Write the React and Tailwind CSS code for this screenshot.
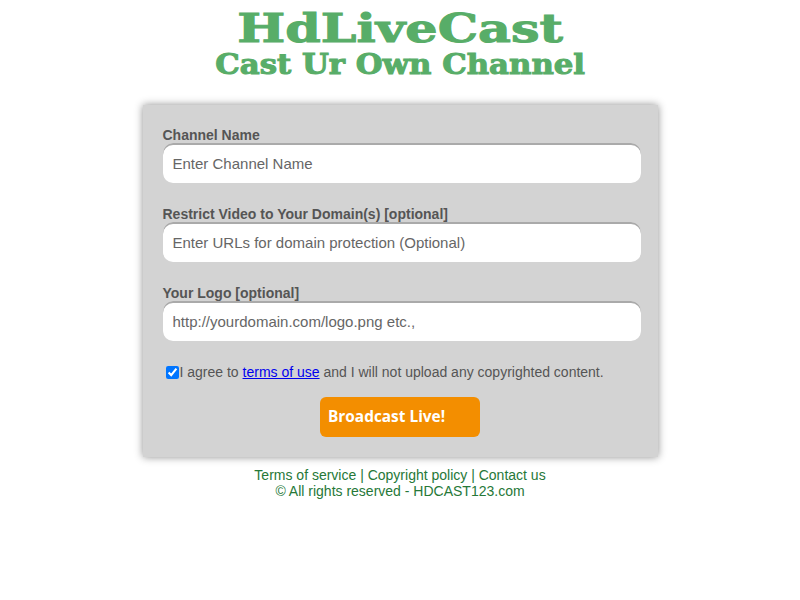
export default function App() {
  return (
    <div className="min-h-screen bg-white flex flex-col items-center font-['Liberation_Sans',Arial,sans-serif]">
      <div className="text-center text-[#58ad68] font-['DejaVu_Serif',serif] font-bold leading-none pt-[8px] [-webkit-text-stroke:1px_#58ad68]">
        <h1 className="text-[40px] leading-[40px] scale-x-[1.27]">HdLiveCast</h1>
        <h2 className="text-[27px] leading-[30px] mt-[2px] scale-x-[1.14]">Cast Ur Own Channel</h2>
      </div>

      <form className="mt-[25px] w-[515px] bg-[#d3d3d3] px-[20px] pt-[20px] pb-[20px] shadow-[0_0_8px_rgba(0,0,0,0.45)]">
        <label className="block text-[14px] font-bold text-[#555] leading-[16px] mt-[2px]">Channel Name</label>
        <input
          type="text"
          placeholder="Enter Channel Name"
          className="block w-[478px] h-[40px] px-[10px] rounded-[10px] bg-white shadow-[inset_0_2px_0_#aaa] text-[15px] placeholder:text-[#666] outline-none"
        />

        <label className="block mt-[23px] text-[14px] font-bold text-[#555] leading-[16px]">Restrict Video to Your Domain(s) [optional]</label>
        <input
          type="text"
          placeholder="Enter URLs for domain protection (Optional)"
          className="block w-[478px] h-[40px] px-[10px] rounded-[10px] bg-white shadow-[inset_0_2px_0_#aaa] text-[15px] placeholder:text-[#666] outline-none"
        />

        <label className="block mt-[23px] text-[14px] font-bold text-[#555] leading-[16px]">Your Logo [optional]</label>
        <input
          type="text"
          placeholder="http://yourdomain.com/logo.png etc.,"
          className="block w-[478px] h-[40px] px-[10px] rounded-[10px] bg-white shadow-[inset_0_2px_0_#aaa] text-[15px] placeholder:text-[#666] outline-none"
        />

        <div className="mt-[21px] flex items-center text-[14px] text-[#555]">
          <input type="checkbox" defaultChecked className="w-[13px] h-[13px] ml-[3px] mr-[1px] accent-[#0075ff]" />
          <span>
            I agree to <a href="#" className="text-[#0000ee] underline">terms of use</a> and I will not upload any copyrighted content.
          </span>
        </div>

        <div className="mt-[14px] flex justify-center">
          <button
            type="button"
            className="w-[160px] h-[40px] rounded-[6px] bg-[#f38e00] text-white text-left pl-[8px] text-[15.4px] font-bold font-['Open_Sans',sans-serif]"
          >
            Broadcast Live!
          </button>
        </div>
      </form>

      <div className="mt-[10px] text-center text-[14px] leading-[16px] text-[#267838]">
        <p>
          <a href="#">Terms of service</a> | <a href="#">Copyright policy</a> | <a href="#">Contact us</a>
        </p>
        <p>© All rights reserved - HDCAST123.com</p>
      </div>
    </div>
  );
}
